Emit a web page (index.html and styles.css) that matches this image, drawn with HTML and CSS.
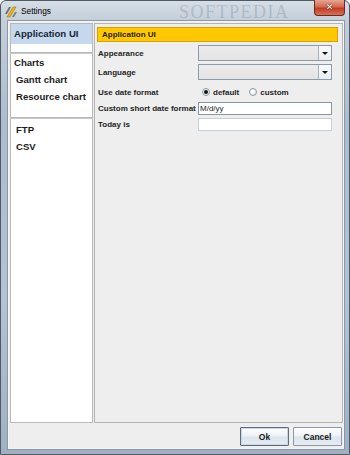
FILE: index.html
```html
<!DOCTYPE html>
<html>
<head>
<meta charset="utf-8">
<link rel="stylesheet" href="styles.css">
</head>
<body>
<div class="window">
  <div class="titlebar">
    <svg class="app-icon" width="13" height="13" viewBox="0 0 13 13">
      <polygon points="2,12 5,12 11,2 8,2" fill="#f2b600" stroke="#8a6a00" stroke-width="0.5"/>
      <polygon points="0,9 2,9 6,2 4,2" fill="#6b6b6b"/>
      <polygon points="7,12 9,12 12,7 10,7" fill="#7a7a7a"/>
    </svg>
    <span class="title">Settings</span>
    <span class="watermark">SOFTPEDIA</span>
    <div class="close"><span>✕</span></div>
  </div>
  <div class="client">
    <div class="main">
      <div class="sidebar">
        <div class="group g1">
          <div class="item head selected">Application UI</div>
        </div>
        <div class="group g2">
          <div class="item head">Charts</div>
          <div class="item">Gantt chart</div>
          <div class="item">Resource chart</div>
        </div>
        <div class="group g3">
          <div class="item">FTP</div>
          <div class="item">CSV</div>
        </div>
      </div>
      <div class="content">
        <div class="section-title">Application UI</div>
        <div class="form">
          <div class="row r-combo1">
            <span class="label">Appearance</span>
            <div class="combo"><div class="combo-btn"><span class="tri"></span></div></div>
          </div>
          <div class="row r-combo2">
            <span class="label">Language</span>
            <div class="combo"><div class="combo-btn"><span class="tri"></span></div></div>
          </div>
          <div class="row r-radio">
            <span class="label">Use date format</span>
            <div class="radios">
              <span class="radio on"></span><span class="radio-label">default</span>
              <span class="radio"></span><span class="radio-label">custom</span>
            </div>
          </div>
          <div class="row r-text1">
            <span class="label">Custom short date format</span>
            <div class="field">M/d/yy</div>
          </div>
          <div class="row r-text2">
            <span class="label">Today is</span>
            <div class="field light"></div>
          </div>
        </div>
      </div>
    </div>
    <div class="footer">
      <button class="btn default">Ok</button>
      <button class="btn">Cancel</button>
    </div>
  </div>
</div>
</body>
</html>
```

FILE: styles.css
```css
html, body {
  margin: 0;
  padding: 0;
  width: 350px;
  height: 455px;
  overflow: hidden;
  font-family: "Liberation Sans", Arial, sans-serif;
}

.window {
  box-sizing: border-box;
  width: 350px;
  height: 455px;
  display: flex;
  flex-direction: column;
  border: 1px solid #4f5a66;
  border-radius: 6px 6px 0 0;
  background: linear-gradient(to bottom, #d6dee6 0px, #c3ced9 20px, #aebdcc 120px, #b4c3d2 300px, #9fb0c2 455px);
}

.titlebar {
  position: relative;
  height: 19px;
  flex: none;
  display: flex;
  align-items: center;
  padding-left: 4px;
}

.app-icon {
  flex: none;
  margin-top: 1px;
}

.title {
  margin-left: 3px;
  font-size: 8.3px;
  color: #000;
  margin-top: 1px;
}

.watermark {
  position: absolute;
  left: 178px;
  top: 1px;
  font-family: "Liberation Serif", serif;
  font-size: 18px;
  letter-spacing: 1.5px;
  color: rgba(150, 162, 175, 0.55);
}

.close {
  position: absolute;
  right: 4px;
  top: -1px;
  width: 31px;
  height: 16px;
  box-sizing: border-box;
  border: 1px solid #6b2a20;
  border-top: none;
  border-radius: 0 0 4px 4px;
  background: linear-gradient(to bottom, #e7a593 0%, #d26a52 45%, #c03d22 55%, #d8705a 100%);
  display: flex;
  align-items: center;
  justify-content: center;
}

.close span {
  color: #fff;
  font-size: 9px;
  font-weight: bold;
  font-family: "DejaVu Sans", sans-serif;
  text-shadow: 0 0 1px #3a1a10, 0 0 1px #3a1a10;
  line-height: 1;
}

.client {
  flex: 1;
  display: flex;
  flex-direction: column;
  margin: 0 4px 4px 6px;
  border: 1px solid #8a97a6;
  box-shadow: inset 0 0 0 1px #f6f6f6;
  background: #eeeeee;
}

.main {
  flex: 1;
  display: flex;
  gap: 1px;
  padding: 2px 1px 0 2px;
}

.sidebar {
  width: 83px;
  flex: none;
  display: flex;
  flex-direction: column;
}

.group {
  background: #fff;
  border: 1px solid #b9b9b9;
  display: flex;
  flex-direction: column;
}

.g1 {
  height: 30px;
  box-sizing: border-box;
}

.g2 {
  height: 65px;
  box-sizing: border-box;
  border-top: 1px solid #c8c8c8;
}

.g3 {
  flex: 1;
  padding-top: 2px;
  border-top: 1px solid #c8c8c8;
}

.item {
  height: 17px;
  line-height: 17px;
  padding-left: 5px;
  font-size: 9.6px;
  font-weight: bold;
  color: #1c1c1c;
  white-space: nowrap;
}

.item.head {
  padding-left: 3px;
}

.item.selected {
  height: 20px;
  line-height: 20px;
  background: #c5d8ec;
  color: #1a2636;
}

.content {
  flex: 1;
  border: 1px solid #b4b4b4;
  background: #eeeeee;
  padding: 3px 4px 0 2px;
}

.section-title {
  height: 13px;
  line-height: 13px;
  border: 1px solid #d7a200;
  background: #ffc800;
  padding-left: 4px;
  font-size: 8px;
  font-weight: bold;
  color: #2a2100;
}

.form {
  padding: 3px 0 0 1px;
  display: flex;
  flex-direction: column;
}

.row {
  display: flex;
  align-items: center;
}

.label {
  width: 100px;
  flex: none;
  font-size: 8px;
  font-weight: bold;
  color: #1e1e1e;
  white-space: nowrap;
}

.r-combo1 { height: 16px; }
.r-combo2 { height: 16px; margin-top: 3px; }
.r-radio { height: 18px; margin-top: 3px; }
.r-text1 { height: 13px; margin-top: 1px; }
.r-text2 { height: 13px; margin-top: 3px; }

.combo {
  width: 134px;
  height: 16px;
  box-sizing: border-box;
  border: 1px solid #8d9aab;
  background: linear-gradient(to bottom, #ececec, #e4e4e4);
  display: flex;
  justify-content: flex-end;
}

.combo-btn {
  width: 12px;
  border-left: 1px solid #a6b2c0;
  background: linear-gradient(to bottom, #fbfbfb, #e9edf1);
  display: flex;
  align-items: center;
  justify-content: center;
}

.tri {
  width: 0;
  height: 0;
  border-left: 3px solid transparent;
  border-right: 3px solid transparent;
  border-top: 3px solid #111;
  margin-top: 1px;
}

.radios {
  display: flex;
  align-items: center;
  padding-left: 4px;
}

.radio {
  width: 8px;
  height: 8px;
  box-sizing: border-box;
  border: 1px solid #8a98a8;
  border-radius: 50%;
  background: radial-gradient(circle at 40% 35%, #ffffff, #dfe5ec);
  position: relative;
}

.radio.on::after {
  content: "";
  position: absolute;
  left: 1px;
  top: 1px;
  width: 4px;
  height: 4px;
  border-radius: 50%;
  background: #111;
}

.radio-label {
  font-size: 8px;
  font-weight: bold;
  color: #1e1e1e;
  margin-left: 3px;
  margin-right: 10px;
}

.field {
  width: 134px;
  height: 13px;
  box-sizing: border-box;
  border: 1px solid #8797a9;
  background: #fff;
  font-size: 8px;
  line-height: 11px;
  padding-left: 1px;
  color: #222;
}

.field.light {
  border-color: #c4d0dd;
}

.footer {
  height: 26px;
  flex: none;
  display: flex;
  justify-content: flex-end;
  align-items: flex-start;
  gap: 4px;
  padding: 4px 2px 0 0;
  box-sizing: border-box;
}

.btn {
  width: 49px;
  height: 19px;
  margin: 0;
  padding: 0;
  border: 1px solid #8a99ab;
  border-radius: 1px;
  background: linear-gradient(to bottom, #ffffff 0%, #eef2f6 45%, #dce4ec 55%, #e6ecf2 100%);
  font-family: "Liberation Sans", Arial, sans-serif;
  font-size: 8.5px;
  font-weight: bold;
  color: #1a1a1a;
}

.btn.default {
  border-color: #5c6d80;
  box-shadow: inset 0 0 0 1px #c9d6e4;
}
```
